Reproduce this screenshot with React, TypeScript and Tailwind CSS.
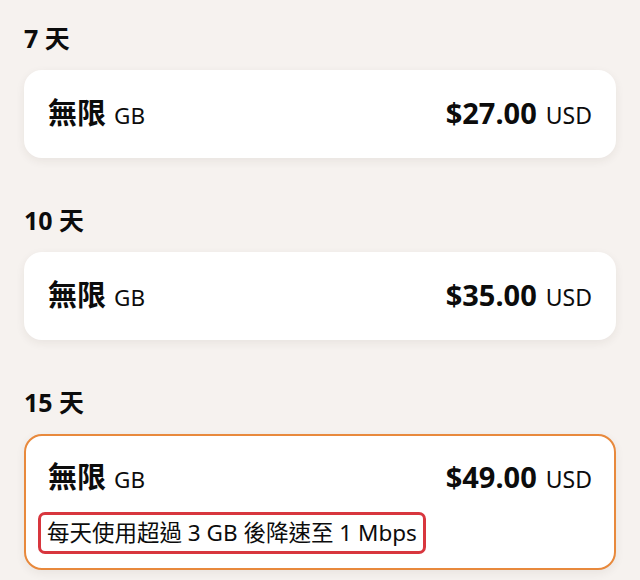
import React from "react";

type Plan = { days: string; price: string; selected?: boolean; note?: string };

const plans: Plan[] = [
  { days: "7 天", price: "$27.00" },
  { days: "10 天", price: "$35.00" },
  { days: "15 天", price: "$49.00", selected: true, note: "每天使用超過 3 GB 後降速至 1 Mbps" },
];

export default function App() {
  return (
    <div
      className="w-[640px] h-[580px] overflow-hidden bg-[#f6f2ef] px-6 pt-[22px] text-[#0c0c0c]"
      style={{ fontFamily: '"Noto Sans", "Noto Sans CJK TC", sans-serif' }}
    >
      {plans.map((p, i) => (
        <div key={p.days} className={i === 0 ? "" : "mt-[46px]"}>
          <div className="text-[25px] leading-[32px] font-bold">{p.days}</div>
          <div
            className={
              "mt-4 rounded-[18px] border-2 bg-white px-[22px] pt-[22px] shadow-[0_3px_10px_rgba(60,40,30,0.07)] " +
              (p.selected ? "border-[#e8893c] pb-[14px]" : "border-white pb-[22px]")
            }
          >
            <div className="flex h-[40px] items-center justify-between">
              <div className="flex items-baseline gap-2">
                <span className="text-[29px] font-bold leading-[40px]">無限</span>
                <span className="text-[22.5px] leading-[40px]">GB</span>
              </div>
              <div className="flex items-baseline gap-[9px]">
                <span className="text-[29px] font-bold leading-[40px]">{p.price}</span>
                <span className="text-[23px] leading-[40px]">USD</span>
              </div>
            </div>
            {p.note && (
              <div className="mt-[14px] -ml-[10px] inline-flex rounded-[7px] border-[3px] border-[#d8363e] px-[6px] text-[22.5px] leading-[36px]">
                {p.note}
              </div>
            )}
          </div>
        </div>
      ))}
    </div>
  );
}
